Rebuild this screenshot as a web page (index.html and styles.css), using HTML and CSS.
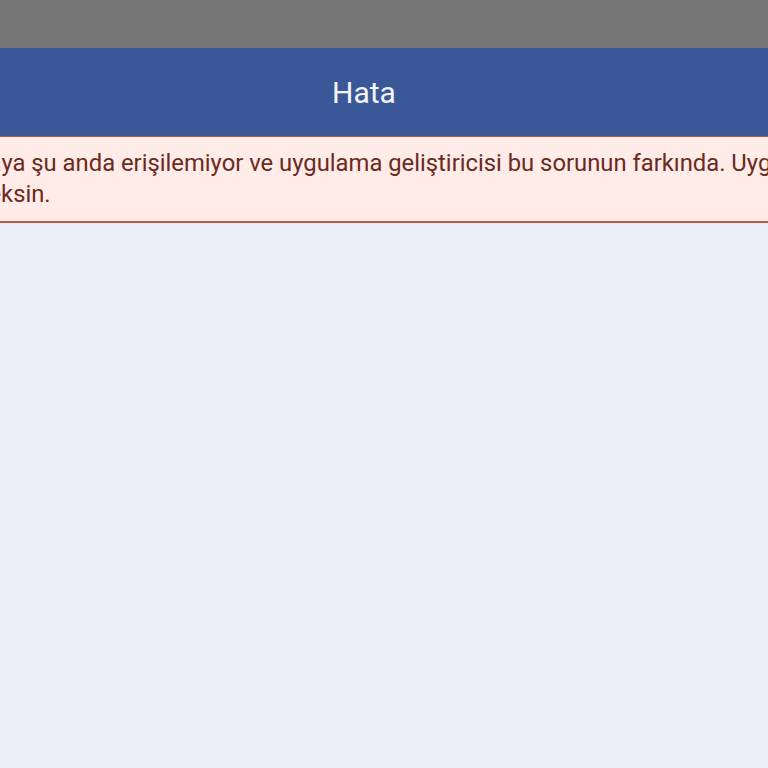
FILE: index.html
```html
<!DOCTYPE html>
<html lang="tr">
<head>
  <meta charset="UTF-8" />
  <title>Hata</title>
  <link rel="stylesheet" href="styles.css">
</head>
<body>

<div class="statusbar"></div>

<div class="page">
  <header class="titlebar">
    <h1>Hata</h1>
  </header>

  <div class="error-box">
    <p>Uygulamaya şu anda erişilemiyor ve uygulama geliştiricisi bu sorunun farkında. Uygulamayı bekleyeceksin.</p>
  </div>
</div>

</body>
</html>
```

FILE: styles.css
```css
html, body {
  height: 100%;
}
body {
  font-family: Roboto, 'Noto Sans', sans-serif;
  background: #ebeef6;
  margin: 0;
  padding: 0;
  overflow: hidden;
}
.statusbar {
  height: 48px;
  background: #767676;
}
.page {
  width: 984px;
  margin-left: -128px;
}
.titlebar {
  height: 88px;
  background: #3a5897;
  display: flex;
  align-items: center;
  justify-content: center;
}
.titlebar h1 {
  margin: 0;
  font-size: 30px;
  font-weight: normal;
  color: #f3f5fb;
}
.error-box {
  background: #ffebe8;
  border-top: 1px solid #c0523e;
  border-bottom: 2px solid #c35a48;
  padding: 11px 2px 11px 24px;
}
.error-box p {
  margin: 0;
  font-size: 23.8px;
  line-height: 31px;
  color: #6a2a20;
}
```
